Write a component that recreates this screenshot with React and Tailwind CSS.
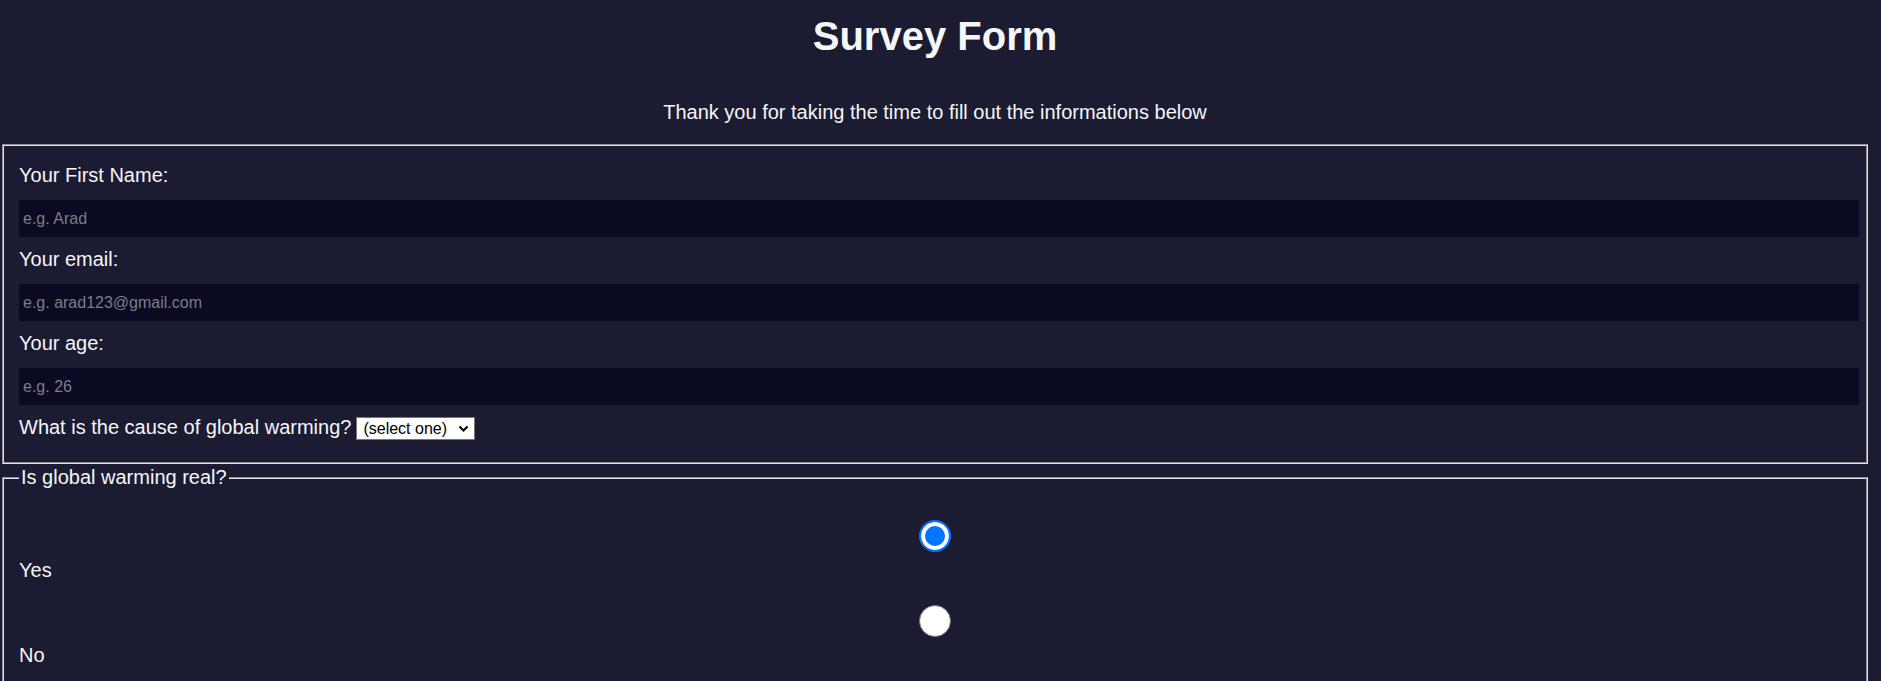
import React from 'react';

const fieldsetCls =
  'mx-[2px] border-2 [border-style:groove] border-[#e4e4e4] px-[15px]';

function TextField({ id, label, type = 'text', placeholder }) {
  return (
    <div>
      <label htmlFor={id} className="block mt-[11px] leading-[23px]">
        {label}
      </label>
      <input
        id={id}
        type={type}
        placeholder={placeholder}
        className="block mt-[13px] box-content w-full h-[37px] px-1 py-0 bg-[#0a0a23] text-[16px] text-[#f5f6f7] placeholder:text-[#7d7d88] outline-none"
      />
    </div>
  );
}

function RadioOption({ id, label, checked }) {
  return (
    <div>
      <div className="flex justify-center h-8">
        <input
          id={id}
          type="radio"
          name="real"
          defaultChecked={checked}
          className="appearance-none w-8 h-8 m-0 rounded-full border border-[#767676] bg-white checked:border-2 checked:border-[#0075ff] checked:bg-[#0075ff] checked:shadow-[inset_0_0_0_4px_#ffffff]"
        />
      </div>
      <label htmlFor={id} className="block mt-[7px] leading-[23px]">
        {label}
      </label>
    </div>
  );
}

export default function App() {
  return (
    <div className="min-h-screen bg-[#1b1b32] text-[#f5f6f7] text-[20px] font-['Liberation_Sans',Arial,sans-serif]">
      <div className="w-[1870px]">
        <header className="text-center">
          <h1 className="pt-[13px] text-[40px] font-bold leading-[46px]">Survey Form</h1>
          <p className="mt-[42px] leading-[23px]">
            Thank you for taking the time to fill out the informations below
          </p>
        </header>

        <form className="mt-[20px]">
          <fieldset className={`${fieldsetCls} pt-[7px] pb-[22px]`}>
            <TextField id="name" label="Your First Name:" placeholder="e.g. Arad" />
            <TextField id="email" label="Your email:" type="email" placeholder="e.g. arad123@gmail.com" />
            <TextField id="age" label="Your age:" type="number" placeholder="e.g. 26" />

            <div className="mt-[11px] flex items-start h-[24px]">
              <label htmlFor="cause" className="leading-[23px]">
                What is the cause of global warming?
              </label>
              <div className="relative ml-[5px] mt-[1px]">
                <select
                  id="cause"
                  defaultValue=""
                  className="appearance-none block w-[119px] h-[23px] pl-[6px] pr-[20px] border border-[#767676] bg-white text-black text-[16px] leading-[21px] outline-none"
                >
                  <option value="" disabled>(select one)</option>
                  <option value="humans">Humans</option>
                  <option value="nature">Nature</option>
                  <option value="both">Both</option>
                </select>
                <svg
                  className="pointer-events-none absolute right-[6px] top-[8px]"
                  width="11"
                  height="8"
                  viewBox="0 0 11 8"
                >
                  <path d="M1.5 1.5 L5.5 5.5 L9.5 1.5" fill="none" stroke="#000" strokeWidth="2" />
                </svg>
              </div>
            </div>
          </fieldset>

          <fieldset className={`${fieldsetCls} mt-[2px] pb-[40px]`}>
            <legend className="px-[2px] leading-[23px]">Is global warming real?</legend>
            <div className="mt-[31px]">
              <RadioOption id="yes" label="Yes" checked />
            </div>
            <div className="mt-[23px]">
              <RadioOption id="no" label="No" />
            </div>
          </fieldset>
        </form>
      </div>
    </div>
  );
}
